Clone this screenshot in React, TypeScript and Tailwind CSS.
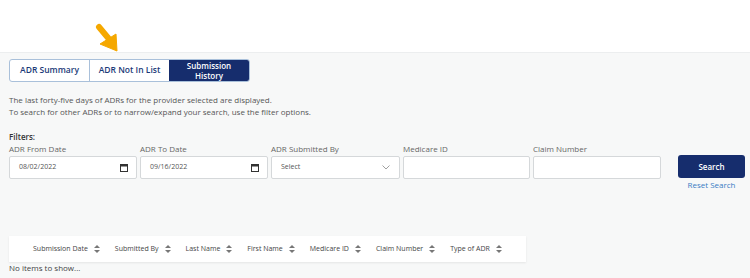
import React from "react";

const Cal = () => (
  <svg width="8" height="8" viewBox="0 0 8 8" className="shrink-0">
    <rect x="0.5" y="0.5" width="7" height="7" fill="none" stroke="#333" strokeWidth="1" />
    <rect x="0.5" y="0.5" width="7" height="2" fill="#333" />
  </svg>
);

const Sort = () => (
  <svg width="6" height="8" viewBox="0 0 6 8" className="shrink-0">
    <polygon points="3,0 6,3 0,3" fill="#777" />
    <polygon points="3,8 6,5 0,5" fill="#777" />
  </svg>
);

const Col = ({ label, last }: { label: string; last?: boolean }) => (
  <div className={"flex items-center gap-[6px] shrink-0 " + (last ? "" : "mr-[15px]")}>
    {label} <Sort />
  </div>
);

export default function App() {
  const font = { fontFamily: '"Open Sans", "Noto Sans", sans-serif' };
  return (
    <div className="w-[750px] h-[278px] bg-white overflow-hidden" style={font}>
      <div className="h-[53px] relative border-b border-[#eceeef]">
        <svg className="absolute left-[90px] top-[20px]" width="30" height="34" viewBox="0 0 30 34">
          <line x1="9" y1="7" x2="19" y2="19" stroke="#f5a800" strokeWidth="6" strokeLinecap="round" />
          <polygon points="10,24 26,14 27,31" fill="#f5a800" stroke="#f5a800" strokeWidth="1" strokeLinejoin="round" />
        </svg>
      </div>
      <div className="bg-[#f7f8f8] h-[225px] px-[9px] pt-[6px]">
        <div className="flex h-[23px] w-[241px] rounded-[3px] border border-[#a9c0da] overflow-hidden bg-white">
          <div className="w-[80px] flex items-center justify-center text-[8.5px] font-semibold text-[#1b3a78] border-r border-[#a9c0da]">ADR Summary</div>
          <div className="w-[79px] flex items-center justify-center text-[8.5px] font-semibold text-[#1b3a78]">ADR Not In List</div>
          <div className="flex-1 flex items-center justify-center text-center text-[8px] leading-[10px] font-semibold text-white bg-[#162d6d]">Submission<br />History</div>
        </div>
        <div className="mt-[12px] text-[8px] leading-[12px] text-[#555]">
          <div>The last forty-five days of ADRs for the provider selected are displayed.</div>
          <div>To search for other ADRs or to narrow/expand your search, use the filter options.</div>
        </div>
        <div className="mt-[14px] text-[8px] font-semibold text-[#333] leading-[10px]">Filters:</div>
        <div className="flex items-start mt-[1px]">
          <div className="flex flex-col w-[128px] mr-[3px] shrink-0">
            <div className="text-[8px] leading-[12px] text-[#666]">ADR From Date</div>
            <div className="mt-[1px] h-[23px] bg-white border border-[#d5d8da] rounded-[2px] flex items-center justify-between pl-[9px] pr-[8px] text-[7px] text-[#555]">
              <span>08/02/2022</span><Cal />
            </div>
          </div>
          <div className="flex flex-col w-[128px] mr-[3px] shrink-0">
            <div className="text-[8px] leading-[12px] text-[#666]">ADR To Date</div>
            <div className="mt-[1px] h-[23px] bg-white border border-[#d5d8da] rounded-[2px] flex items-center justify-between pl-[9px] pr-[8px] text-[7px] text-[#555]">
              <span>09/16/2022</span><Cal />
            </div>
          </div>
          <div className="flex flex-col w-[129px] mr-[3px] shrink-0">
            <div className="text-[8px] leading-[12px] text-[#666]">ADR Submitted By</div>
            <div className="mt-[1px] h-[23px] bg-white border border-[#d5d8da] rounded-[2px] flex items-center justify-between pl-[9px] pr-[9px] text-[7px] text-[#555]">
              <span>Select</span>
              <svg width="8" height="5" viewBox="0 0 8 5"><polyline points="0.5,0.5 4,4 7.5,0.5" fill="none" stroke="#888" strokeWidth="0.8" /></svg>
            </div>
          </div>
          <div className="flex flex-col w-[127px] mr-[3px] shrink-0">
            <div className="text-[8px] leading-[12px] text-[#666]">Medicare ID</div>
            <div className="mt-[1px] h-[23px] bg-white border border-[#d5d8da] rounded-[2px]" />
          </div>
          <div className="flex flex-col w-[128px] shrink-0">
            <div className="text-[8px] leading-[12px] text-[#666]">Claim Number</div>
            <div className="mt-[1px] h-[23px] bg-white border border-[#d5d8da] rounded-[2px]" />
          </div>
          <div className="flex flex-col items-center ml-[17px] mt-[12px] w-[67px] shrink-0">
            <div className="w-[67px] h-[23px] bg-[#162d6d] rounded-[3px] flex items-center justify-center text-[8px] font-semibold text-white">Search</div>
            <div className="mt-[1px] text-[8px] leading-[12px] text-[#3a7cc4]">Reset Search</div>
          </div>
        </div>
        <div className="mt-[45px] w-[517px] h-[26px] bg-white shadow-[0_1px_2px_rgba(0,0,0,0.08)] flex items-center pl-[24px] text-[7px] text-[#444]">
          <Col label="Submission Date" />
          <Col label="Submitted By" />
          <Col label="Last Name" />
          <Col label="First Name" />
          <Col label="Medicare ID" />
          <Col label="Claim Number" />
          <Col label="Type of ADR" last />
        </div>
        <div className="text-[8px] leading-[12px] text-[#444]">No items to show...</div>
      </div>
    </div>
  );
}
